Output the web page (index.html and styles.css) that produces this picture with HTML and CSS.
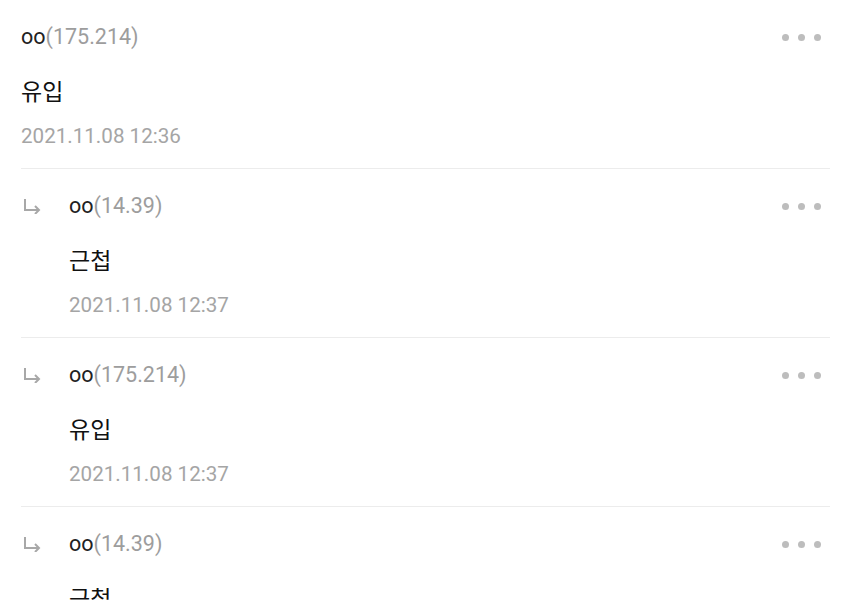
FILE: index.html
```html
<!DOCTYPE html>
<html lang="ko">
<head>
  <meta charset="UTF-8">
  <meta name="viewport" content="width=device-width, initial-scale=1.0">
  <title>댓글</title>
  <link rel="stylesheet" href="styles.css">
</head>
<body>

  <div class="comment-list">
    <div class="comment">
      <div class="comment-body">
        <div class="comment-head">
          <p class="writer">oo<span class="ip">(175.214)</span></p>
          <span class="more"><i></i><i></i><i></i></span>
        </div>
        <p class="text">유입</p>
        <p class="date">2021.11.08 12:36</p>
      </div>
    </div>

    <div class="comment reply">
      <svg class="reply-arrow" width="20" height="16" viewBox="0 0 20 16">
        <path d="M2 1 V12 H16 M12 8 L16 12 L12 16" fill="none" stroke="#a8a8a8" stroke-width="2"/>
      </svg>
      <div class="comment-body">
        <div class="comment-head">
          <p class="writer">oo<span class="ip">(14.39)</span></p>
          <span class="more"><i></i><i></i><i></i></span>
        </div>
        <p class="text">근첩</p>
        <p class="date">2021.11.08 12:37</p>
      </div>
    </div>

    <div class="comment reply">
      <svg class="reply-arrow" width="20" height="16" viewBox="0 0 20 16">
        <path d="M2 1 V12 H16 M12 8 L16 12 L12 16" fill="none" stroke="#a8a8a8" stroke-width="2"/>
      </svg>
      <div class="comment-body">
        <div class="comment-head">
          <p class="writer">oo<span class="ip">(175.214)</span></p>
          <span class="more"><i></i><i></i><i></i></span>
        </div>
        <p class="text">유입</p>
        <p class="date">2021.11.08 12:37</p>
      </div>
    </div>

    <div class="comment reply">
      <svg class="reply-arrow" width="20" height="16" viewBox="0 0 20 16">
        <path d="M2 1 V12 H16 M12 8 L16 12 L12 16" fill="none" stroke="#a8a8a8" stroke-width="2"/>
      </svg>
      <div class="comment-body">
        <div class="comment-head">
          <p class="writer">oo<span class="ip">(14.39)</span></p>
          <span class="more"><i></i><i></i><i></i></span>
        </div>
        <p class="text">근첩</p>
        <p class="date">2021.11.08 12:37</p>
      </div>
    </div>
  </div>

</body>
</html>
```

FILE: styles.css
```css
body {
  margin: 0;
  padding: 0;
  font-family: Roboto, "Noto Sans CJK KR", sans-serif;
  background-color: #ffffff;
  color: #111;
  overflow: hidden;
}

.comment-list {
  padding: 0 20px 0 21px;
  border-top: 1px solid #f2f2f2;
  margin-top: -1px;
}

.comment {
  display: flex;
  align-items: flex-start;
  padding: 22px 0 17px;
  border-bottom: 1px solid #ececec;
}

.reply-arrow {
  flex: none;
  margin: 7px 26px 0 2px;
}

.comment-body {
  flex: 1;
}

.comment-head {
  display: flex;
  justify-content: space-between;
  align-items: center;
}

.writer {
  margin: 0;
  font-size: 21.5px;
  line-height: 30px;
  color: #222;
}

.ip {
  color: #9d9d9d;
}

.more {
  display: flex;
  gap: 9px;
  margin-right: 9px;
}

.more i {
  width: 7px;
  height: 7px;
  border-radius: 50%;
  background-color: #bdbdbd;
}

.text {
  margin: 24px 0 0;
  font-size: 23px;
  line-height: 34px;
  color: #111;
}

.date {
  margin: 11px 0 0;
  font-size: 20.6px;
  line-height: 30px;
  color: #a5a5a5;
}
```
